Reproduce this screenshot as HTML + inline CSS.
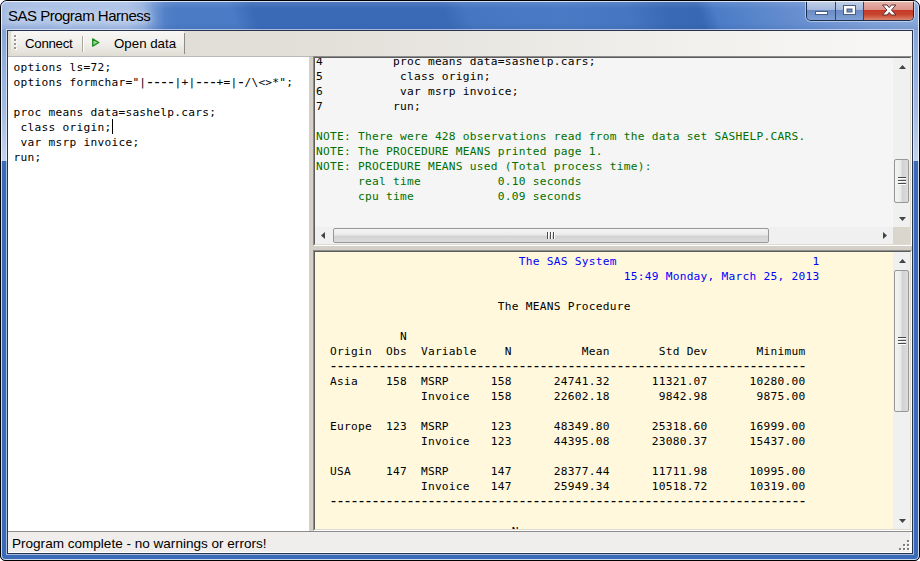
<!DOCTYPE html>
<html>
<head>
<meta charset="utf-8">
<title>SAS Program Harness</title>
<style>
html,body{margin:0;padding:0;background:#fff;}
body{width:920px;height:561px;overflow:hidden;position:relative;font-family:"Liberation Sans",sans-serif;}
.abs{position:absolute;}
#win{position:absolute;left:0;top:0;width:918px;height:559px;border:1px solid #000;border-radius:7px 7px 5px 5px;overflow:hidden;
  background:#3b6bb7;}
/* inner white highlight line */
#hl{position:absolute;left:0;top:0;width:916px;height:557px;border:1px solid rgba(255,255,255,.75);border-radius:6px 6px 4px 4px;z-index:5;pointer-events:none;}
#titlebar{position:absolute;left:0;top:0;width:918px;height:30px;
  background:
   linear-gradient(to bottom, rgba(255,255,255,.12) 0, rgba(255,255,255,0) 8px, rgba(40,80,150,0) 22px, rgba(40,80,150,.18) 30px),
   linear-gradient(to right, #a4bbe2 0, #a9c0e6 60px, #acc2e7 125px, rgba(172,194,231,.8) 141px, rgba(150,178,224,.5) 153px, rgba(110,150,210,.2) 164px, rgba(75,123,197,0) 176px),
   linear-gradient(70deg, #4b7bc5 -13.7px, #4b7bc5 223.1px, #3a6ab6 243.8px, #3a6ab6 423.3px, #4676c1 444.9px, #4a7ac4 531.4px, #4575c0 597.1px, #3968b4 632.8px, #3867b3 662.9px, #4c7cc6 678.0px, #5a86cb 719.3px, #6a91d1 761.6px, #80a1d8 818.0px, #8aaada 879.0px);}
#sideL,#sideR{position:absolute;top:29px;width:8px;height:131px;background:linear-gradient(to bottom,#86a6d8 0,#a3bbe2 60%,#c2d3ec 100%);}
#sideL{left:0;} #sideR{left:910px;}
#title{position:absolute;left:7px;top:6px;font-size:15px;line-height:18px;color:#000;white-space:nowrap;letter-spacing:-0.5px;text-shadow:0 0 7px rgba(255,255,255,.75),0 0 12px rgba(255,255,255,.55);}
/* caption buttons */
#cap{position:absolute;left:805px;top:0;width:106px;height:19px;border:1px solid #1c2c4c;border-top:none;border-radius:0 0 5px 5px;overflow:hidden;box-shadow:0 0 0 1px rgba(255,255,255,.45);}
#cap div{position:absolute;top:0;height:19px;}
#bmin{left:0;width:28px;background:linear-gradient(to bottom,#c4d2e9 0,#a6badd 45%,#6a8bc4 50%,#7fa0d4 100%);border-right:1px solid #33456b;}
#bmax{left:29px;width:27px;background:linear-gradient(to bottom,#c4d2e9 0,#a6badd 45%,#6a8bc4 50%,#7fa0d4 100%);border-right:1px solid #33456b;}
#bclose{left:57px;width:49px;background:linear-gradient(to bottom,#e9b8b0 0,#dc948b 45%,#c43a26 50%,#c8452f 72%,#dc8570 100%);}
/* client */
#client{position:absolute;left:6px;top:29px;width:904px;height:522px;border:1px solid #27344f;background:#f0f0f0;box-shadow:0 0 0 1px rgba(255,255,255,.55);}
#tb{position:absolute;left:0;top:0;width:904px;height:26px;box-sizing:border-box;border-bottom:1px solid #b9b9bd;background:linear-gradient(to right,#dedbd3 0,#e3e0d9 35%,#f1f0ed 75%,#f8f7f6 100%);}
#strip{position:absolute;left:3px;top:0;width:174px;height:24px;background:linear-gradient(to bottom,#f8f7f5 0,#f1efeb 50%,#e1ded6 100%);border-radius:3px 3px 3px 3px;box-sizing:border-box;}
#strip:after{content:'';position:absolute;right:0;top:2px;width:1px;height:21px;background:#8d8b86;}
.tbt{position:absolute;top:5px;font-size:13.3px;line-height:16px;color:#000;white-space:nowrap;}
.mono{font-family:"DejaVu Sans Mono","Liberation Mono",monospace;font-size:11.2px;letter-spacing:0.2576px;line-height:15px;white-space:pre;margin:0;}
#ed{position:absolute;left:0;top:26px;width:301px;height:474px;background:#fff;overflow:hidden;}
#ed pre{position:absolute;left:5.5px;top:3px;color:#000;}
#split{position:absolute;left:301px;top:26px;width:4px;height:474px;background:#d4d0c8;}
.sunk{position:absolute;border:1px solid;border-color:#8c8c8c #fff #fff #8c8c8c;box-sizing:border-box;}
.sunk>.in{position:absolute;left:0;top:0;right:0;bottom:0;border:1px solid;border-color:#5c5c5c #dedad2 #dedad2 #5c5c5c;overflow:hidden;}
#log{left:305px;top:25px;width:599px;height:190px;}
#log .in{background:#f5f5f5;}
#out{left:305px;top:219px;width:599px;height:281px;}
#out .in{background:#fff8dc;}
#rsplit{position:absolute;left:305px;top:215px;width:599px;height:4px;background:#d4d0c8;}
#status{position:absolute;left:0;top:500px;width:904px;height:22px;background:#f0eeec;border-top:1px solid #8c8c8c;box-sizing:border-box;box-shadow:inset -2px -1px 0 #fff;}
#status span{position:absolute;left:4px;top:4px;font-size:13.55px;line-height:16px;color:#000;white-space:nowrap;}
.d{font-size:15px;letter-spacing:-2.03px;line-height:0;margin-left:-1px;margin-right:1px;position:relative;top:1px;}
.g{color:#007000;} .b{color:#0000ff;}
.sbv{position:absolute;right:0;top:0;width:17px;background:#f0f0f0;border-left:0;}
.sbh{position:absolute;left:0;bottom:0;height:17px;background:#f0f0f0;}
.thumb{position:absolute;border:1px solid #979797;border-radius:2px;box-sizing:border-box;}
.thumb.v{background:linear-gradient(to right,#f4f4f4 0,#eaeaea 45%,#d2d2d2 55%,#dcdcdc 100%);}
.thumb.h{background:linear-gradient(to bottom,#f4f4f4 0,#eaeaea 45%,#d2d2d2 55%,#dcdcdc 100%);}
svg{position:absolute;overflow:visible;}
</style>
</head>
<body>
<div id="win">
  <div id="titlebar"></div>
  <div id="sideL"></div><div id="sideR"></div>
  <div id="hl"></div>
  <div id="title">SAS Program Harness</div>
  <div id="cap">
    <div id="bmin"></div><div id="bmax"></div><div id="bclose"></div>
    <svg width="106" height="19" viewBox="0 0 106 19" style="left:0;top:0">
      <rect x="8.500" y="10.500" width="12" height="3" fill="#fff" stroke="#4a5c80" stroke-width="1"/>
      <rect x="36.500" y="4.500" width="12" height="9" fill="#fff" stroke="#4a5c80" stroke-width="1"/>
      <rect x="40" y="8" width="5" height="3" fill="#6f8fc4" stroke="#4a5c80" stroke-width="1"/>
      <path d="M75.500 4h4.600l2.100 2.600 2.100-2.600h4.600l-4.400 5 4.400 5h-4.600l-2.100-2.600-2.100 2.600h-4.600l4.400-5z" fill="#fff" stroke="#5a3030" stroke-width="1"/>
    </svg>
  </div>
  <div id="client">
    <div id="tb">
      <div id="strip"></div>
      <svg width="4" height="16" viewBox="0 0 4 16" style="left:6px;top:4px">
        <g fill="#fff"><rect x="1" y="1" width="2" height="2"/><rect x="1" y="5" width="2" height="2"/><rect x="1" y="9" width="2" height="2"/><rect x="1" y="13" width="2" height="2"/></g>
        <g fill="#9a9893"><rect x="0" y="0" width="2" height="2"/><rect x="0" y="4" width="2" height="2"/><rect x="0" y="8" width="2" height="2"/><rect x="0" y="12" width="2" height="2"/></g>
      </svg>
      <div class="tbt" style="left:17px;letter-spacing:-0.3px">Connect</div>
      <div class="abs" style="left:74px;top:5px;width:1px;height:16px;background:#a9a69d;border-right:1px solid #fff"></div>
      <svg width="9" height="10" viewBox="0 0 9 10" style="left:84px;top:7px"><path d="M0.700 0.900L6.800 4.500L0.700 8.100z" fill="#8fd98f" stroke="#1c8a1c" stroke-width="1.300" stroke-linejoin="round"/></svg>
      <div class="tbt" style="left:106px">Open data</div>
    </div>
    <div id="ed"><pre class="mono">options ls=72;
options formchar="|<span class="d">----</span>|+|<span class="d">---</span>+=|<span class="d">-</span>/\&lt;&gt;*";

proc means data=sashelp.cars;
 class origin;
 var msrp invoice;
run;</pre>
      <div class="abs" style="left:104px;top:62px;width:1px;height:15px;background:#000"></div>
    </div>
    <div id="split"></div>
    <div id="log" class="sunk"><div class="in">
<pre class="mono abs" style="left:1px;top:-4px;color:#000">4          proc means data=sashelp.cars;
5           class origin;
6           var msrp invoice;
7          run;

<span class="g">NOTE: There were 428 observations read from the data set SASHELP.CARS.
NOTE: The PROCEDURE MEANS printed page 1.
NOTE: PROCEDURE MEANS used (Total process time):
      real time           0.10 seconds
      cpu time            0.09 seconds</span></pre>
      <div class="sbv" style="height:169px">
        <svg width="17" height="170" viewBox="0 0 17 170" style="left:0;top:0">
          <path d="M6 11L9.500 7L13 11z" fill="#444"/>
          <path d="M6 159L9.500 163L13 159z" fill="#444"/>
        </svg>
        <div class="thumb v" style="left:1px;top:101px;width:15px;height:44px"></div>
        <svg width="8" height="8" viewBox="0 0 8 8" style="left:5px;top:119px"><path d="M0 1.500h8M0 4.500h8M0 7.500h8" stroke="#fff" stroke-width="1"/><path d="M0 0.500h8M0 3.500h8M0 6.500h8" stroke="#4a4a4a" stroke-width="1"/></svg>
      </div>
      <div class="sbh" style="width:578px">
        <svg width="578" height="17" viewBox="0 0 578 17" style="left:0;top:0">
          <path d="M10 5L6 8.500L10 12z" fill="#444"/>
          <path d="M568 5L572 8.500L568 12z" fill="#444"/>
        </svg>
        <div class="thumb h" style="left:18px;top:1px;width:436px;height:15px"></div>
        <svg width="8" height="8" viewBox="0 0 8 8" style="left:232px;top:5px"><path d="M1.500 0v7M4.500 0v7M7.500 0v7" stroke="#fff" stroke-width="1"/><path d="M0.500 0v7M3.500 0v7M6.500 0v7" stroke="#4a4a4a" stroke-width="1"/></svg>
      </div>
      <div class="abs" style="right:0;bottom:0;width:17px;height:17px;background:#dad6ce"></div>
    </div></div>
    <div id="rsplit"></div>
    <div id="out" class="sunk"><div class="in">
<pre class="mono abs" style="left:1px;top:2px;color:#000"><span class="b">                             The SAS System                            1
                                            15:49 Monday, March 25, 2013</span>

                          The MEANS Procedure

            N
  Origin  Obs  Variable    N          Mean       Std Dev       Minimum
  <span class="d">--------------------------------------------------------------------</span>
  Asia    158  MSRP      158      24741.32      11321.07      10280.00
               Invoice   158      22602.18       9842.98       9875.00

  Europe  123  MSRP      123      48349.80      25318.60      16999.00
               Invoice   123      44395.08      23080.37      15437.00

  USA     147  MSRP      147      28377.44      11711.98      10995.00
               Invoice   147      25949.34      10518.72      10319.00
  <span class="d">--------------------------------------------------------------------</span>

                            N</pre>
      <div class="sbv" style="height:277px">
        <svg width="17" height="278" viewBox="0 0 17 278" style="left:0;top:0">
          <path d="M6 11L9.500 7L13 11z" fill="#444"/>
          <path d="M6 267L9.500 271L13 267z" fill="#444"/>
        </svg>
        <div class="thumb v" style="left:1px;top:18px;width:15px;height:142px"></div>
        <svg width="8" height="8" viewBox="0 0 8 8" style="left:5px;top:85px"><path d="M0 1.500h8M0 4.500h8M0 7.500h8" stroke="#fff" stroke-width="1"/><path d="M0 0.500h8M0 3.500h8M0 6.500h8" stroke="#4a4a4a" stroke-width="1"/></svg>
      </div>
    </div></div>
    <div id="status"><span>Program complete - no warnings or errors!</span>
      <svg width="12" height="12" viewBox="0 0 12 12" style="left:890px;top:7px">
        <g fill="#fff"><rect x="10" y="2" width="2" height="2"/><rect x="6" y="6" width="2" height="2"/><rect x="10" y="6" width="2" height="2"/><rect x="2" y="10" width="2" height="2"/><rect x="6" y="10" width="2" height="2"/><rect x="10" y="10" width="2" height="2"/></g>
        <g fill="#7f7f7f"><rect x="9" y="1" width="2" height="2"/><rect x="5" y="5" width="2" height="2"/><rect x="9" y="5" width="2" height="2"/><rect x="1" y="9" width="2" height="2"/><rect x="5" y="9" width="2" height="2"/><rect x="9" y="9" width="2" height="2"/></g>
      </svg>
    </div>
  </div>
</div>
</body>
</html>
